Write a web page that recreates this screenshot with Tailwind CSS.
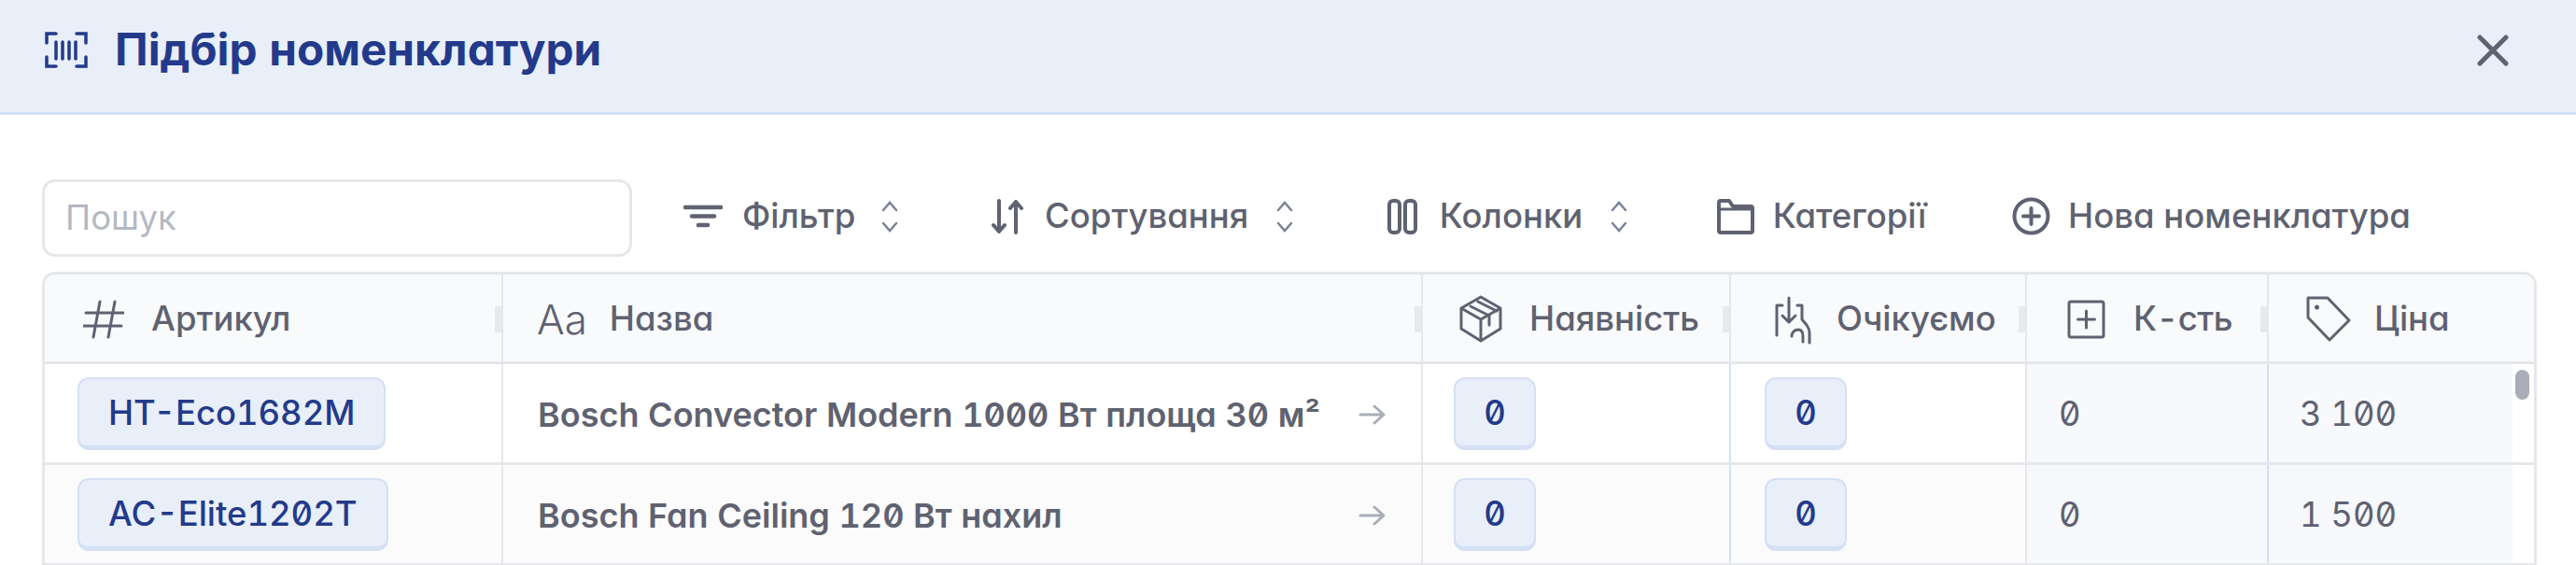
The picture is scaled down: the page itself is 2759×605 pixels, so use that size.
<!DOCTYPE html>
<html lang="uk">
  <head>
    <meta charset="UTF-8" />
    <title>Підбір номенклатури</title>
    <script src="https://cdn.jsdelivr.net/npm/@tailwindcss/browser@4"></script>
  </head>
  <body class="h-[605px] overflow-hidden bg-white font-['Inter',sans-serif] [font-feature-settings:'cv11','tnum','zero'] text-[#5f6270]">
    <!-- Шапка -->
    <header class="flex h-[123px] items-center justify-between border-b-[3px] border-[#d5e0f5] bg-[#e8eff9] pb-[12px] pl-[47px] pr-[72px]">
      <div class="flex items-center gap-[28px]">
        <svg class="h-[41px] w-[48px]" viewBox="12 13 48 41" fill="none" stroke="#233a8b" stroke-width="3.500" stroke-linecap="round">
          <path d="M25 16H15v10M47 16h10v10M25 51H15V41M47 51h10V41" />
          <path d="M25 25v18M32 25v18M39 25v18M46 25v18" />
        </svg>
        <h1 class="text-[47.7px] leading-none font-bold text-[#233a8b]">Підбір номенклатури</h1>
      </div>
      <svg class="h-[34px] w-[34px]" viewBox="0 0 34 34" fill="none" stroke="#5f6270" stroke-width="5" stroke-linecap="round">
        <path d="M3 3l28 28M31 3L3 31" />
      </svg>
    </header>

    <main class="pl-[45px] pr-[42px] pt-[69px]">
      <!-- Панель інструментів -->
      <div class="mb-[16px] flex h-[83px] items-center text-[36.5px] font-medium">
        <div class="flex h-[83px] w-[632px] items-center rounded-[14px] border-[3px] border-[#e5e7eb] pl-[22px] text-[#b4b8c2] font-normal">Пошук</div>

        <button class="ml-[55px] flex items-center pb-[4px]">
          <svg class="mr-[21px] h-[26px] w-[42px]" viewBox="0 0 42 26" fill="none" stroke="#5f6270" stroke-width="4.500" stroke-linecap="round">
            <path d="M2 3h38M9 12.500h24M16 22h10" />
          </svg>
          <span class="w-[119px]">Фільтр</span>
          <svg class="ml-[30px] h-[34px] w-[18px]" viewBox="0 0 18 34" fill="none" stroke="#7b8299" stroke-width="2.500" stroke-linecap="round">
            <path d="M2 10l7-8 7 8M2 24l7 8 7-8" />
          </svg>
        </button>

        <button class="ml-[100px] flex items-center pb-[4px]">
          <svg class="mr-[23px] h-[38px] w-[34px]" viewBox="0 0 34 38" fill="none" stroke="#5f6270" stroke-width="4" stroke-linecap="round" stroke-linejoin="round">
            <path d="M8 2v33M2 28l6 7 6-7M26 36V3M20 10l6-7 6 7" />
          </svg>
          <span class="w-[218px]">Сортування</span>
          <svg class="ml-[30px] h-[34px] w-[18px]" viewBox="0 0 18 34" fill="none" stroke="#7b8299" stroke-width="2.500" stroke-linecap="round">
            <path d="M2 10l7-8 7 8M2 24l7 8 7-8" />
          </svg>
        </button>

        <button class="ml-[101px] flex items-center pb-[4px]">
          <svg class="mr-[22px] h-[38px] w-[32px]" viewBox="0 0 32 38" fill="none" stroke="#5f6270" stroke-width="4">
            <rect x="2" y="2" width="11" height="34" rx="4" />
            <rect x="19" y="2" width="11" height="34" rx="4" />
          </svg>
          <span class="w-[157px]">Колонки</span>
          <svg class="ml-[28px] h-[34px] w-[18px]" viewBox="0 0 18 34" fill="none" stroke="#7b8299" stroke-width="2.500" stroke-linecap="round">
            <path d="M2 10l7-8 7 8M2 24l7 8 7-8" />
          </svg>
        </button>

        <button class="ml-[96px] flex items-center pb-[4px]">
          <svg class="mr-[16px] h-[38px] w-[40px]" viewBox="0 0 40 38" fill="none" stroke="#5f6270" stroke-width="4" stroke-linejoin="round">
            <path d="M2 4a2 2 0 0 1 2-2h9l4 6h19a2 2 0 0 1 2 2v24a2 2 0 0 1-2 2H4a2 2 0 0 1-2-2z" />
            <path d="M2 11h36" stroke-width="3" />
          </svg>
          <span class="w-[172px] whitespace-nowrap">Категорії</span>
        </button>

        <button class="ml-[88px] flex items-center pb-[4px]">
          <svg class="mr-[19px] h-[41px] w-[41px]" viewBox="0 0 41 41" fill="none" stroke="#5f6270" stroke-width="4" stroke-linecap="round">
            <circle cx="20.500" cy="20.500" r="18" />
            <path d="M20.500 12v17M12 20.500h17" />
          </svg>
          <span class="whitespace-nowrap">Нова номенклатура</span>
        </button>
      </div>

      <!-- Таблиця -->
      <div class="relative rounded-t-[14px] border-[3px] border-[#e5e7eb]">
        <div class="grid grid-cols-[491px_985px_330px_317px_259px_1fr] rounded-t-[12px] border-b-[3px] border-[#e5e7eb] bg-[#f9fafc] text-[36.5px] font-medium">
          <div class="relative flex h-[93px] items-center border-r-[2px] border-[#e5e7eb] pl-[41px] pt-[2px]">
            <svg class="mr-[29px] h-[42px] w-[44px]" viewBox="0 0 44 42" fill="none" stroke="#5f6270" stroke-width="3" stroke-linecap="round">
              <path d="M18 2L11 40M34 2l-7 38M3 14h40M1 28h40" />
            </svg>
            Артикул
            <span class="absolute top-[34px] right-0 h-[28px] w-[7px] bg-[#e8e9ed]"></span>
          </div>
          <div class="relative flex h-[93px] items-center border-r-[2px] border-[#e5e7eb] pl-[36px] pt-[2px]">
            <span class="mr-[24px] text-[44px] leading-none font-light [font-feature-settings:normal]">Aa</span>
            Назва
            <span class="absolute top-[34px] right-0 h-[28px] w-[7px] bg-[#e8e9ed]"></span>
          </div>
          <div class="relative flex h-[93px] items-center border-r-[2px] border-[#e5e7eb] pl-[38px] pt-[2px]">
            <svg class="mr-[28px] h-[53px] w-[48px]" viewBox="12 15 48 53" fill="none" stroke="#5f6270" stroke-width="3" stroke-linecap="round" stroke-linejoin="round">
              <path d="M36 18l21 12v22L36 65 15 52V30zM15 30l21 12 21-12M36 42v23M25 28l20 10v10M33 23l20 10" />
            </svg>
            Наявність
            <span class="absolute top-[34px] right-0 h-[28px] w-[7px] bg-[#e8e9ed]"></span>
          </div>
          <div class="relative flex h-[93px] items-center border-r-[2px] border-[#e5e7eb] pl-[46px] pt-[2px]">
            <svg class="mr-[25px] h-[54px] w-[42px]" viewBox="18 14 42 54" fill="none" stroke="#5f6270" stroke-width="3" stroke-linecap="round" stroke-linejoin="round">
              <path d="M34 18v26M27 37l7 7 7-7M27 26h-6v32M43 26h5v15l5 6c2 3 3 5 3 8v11M37 59c0-4 3-7 7-7 4 0 5 3 5 7v6" />
            </svg>
            Очікуємо
            <span class="absolute top-[34px] right-0 h-[28px] w-[7px] bg-[#e8e9ed]"></span>
          </div>
          <div class="relative flex h-[93px] items-center border-r-[2px] border-[#e5e7eb] pl-[43px] pt-[2px]">
            <svg class="mr-[30px] h-[42px] w-[41px]" viewBox="0 0 41 42" fill="none" stroke="#5f6270" stroke-width="3" stroke-linecap="round">
              <rect x="2" y="2" width="37" height="38" rx="2" />
              <path d="M20.500 12v18M11.500 21h18" />
            </svg>
            <span class="tracking-[-0.5px]">К-сть</span>
            <span class="absolute top-[34px] right-0 h-[28px] w-[7px] bg-[#e8e9ed]"></span>
          </div>
          <div class="flex h-[93px] items-center pl-[39px] pt-[2px]">
            <svg class="mr-[24px] h-[50px] w-[50px]" viewBox="10 15 50 50" fill="none" stroke="#5f6270" stroke-width="3" stroke-linejoin="round">
              <path d="M13 17h21l23 24-21 21-23-24z" />
              <circle cx="22.500" cy="27" r="2.500" fill="#5f6270" stroke="none" />
            </svg>
            Ціна
          </div>
        </div>

        <!-- Рядки -->
        <div class="grid grid-cols-[491px_985px_330px_317px_259px_1fr] border-b-[3px] border-[#e5e7eb] text-[36.4px]">
          <div class="flex h-[105px] items-center border-r-[2px] border-[#e5e7eb] pl-[35px]">
            <span class="flex h-[78px] items-center rounded-[12px] border-x-[2px] border-t-[2px] border-b-[5px] border-[#d5e0f5] bg-[#e8eff9] px-[31px] pt-[2px] font-medium text-[#233a8b]">HT-Eco1682M</span>
          </div>
          <div class="flex h-[105px] items-center justify-between border-r-[2px] border-[#e5e7eb] pl-[37px] pr-[38px] pt-[2px] text-[36px] font-semibold whitespace-nowrap">
            <span>Bosch Convector Modern 1000 Вт площа 30 м²</span>
            <svg class="h-[24px] w-[29px]" viewBox="0 0 29 24" fill="none" stroke="#a9adb8" stroke-width="3" stroke-linecap="round" stroke-linejoin="round">
              <path d="M2 12h25M17 3l10 9-10 9" />
            </svg>
          </div>
          <div class="flex h-[105px] items-center border-r-[2px] border-[#d5e0f5] pl-[33px]">
            <span class="flex h-[78px] w-[88px] items-center justify-center rounded-[12px] border-x-[2px] border-t-[2px] border-b-[5px] border-[#d5e0f5] bg-[#e8eff9] pt-[2px] font-medium text-[#233a8b]">0</span>
          </div>
          <div class="flex h-[105px] items-center border-r-[2px] border-[#e5e7eb] pl-[36px]">
            <span class="flex h-[78px] w-[88px] items-center justify-center rounded-[12px] border-x-[2px] border-t-[2px] border-b-[5px] border-[#d5e0f5] bg-[#e8eff9] pt-[2px] font-medium text-[#233a8b]">0</span>
          </div>
          <div class="flex h-[105px] items-center border-r-[2px] border-[#d5e0f5] bg-[#f8f9fd] pl-[34px] pt-[2px]">0</div>
          <div class="mr-[23px] flex h-[105px] items-center whitespace-pre bg-[#f8f9fd] pl-[33px] pt-[2px]">3 100</div>
        </div>

        <div class="grid grid-cols-[491px_985px_330px_317px_259px_1fr] border-b-[3px] border-[#e5e7eb] text-[36.4px]">
          <div class="flex h-[105px] items-center border-r-[2px] border-[#e5e7eb] bg-[#fbfbfc] pl-[35px]">
            <span class="flex h-[78px] items-center rounded-[12px] border-x-[2px] border-t-[2px] border-b-[5px] border-[#d5e0f5] bg-[#e8eff9] px-[31px] pt-[2px] font-medium text-[#233a8b]">AC-Elite1202T</span>
          </div>
          <div class="flex h-[105px] items-center justify-between border-r-[2px] border-[#e5e7eb] bg-[#fbfbfc] pl-[37px] pr-[38px] pt-[2px] text-[36px] font-semibold whitespace-nowrap">
            <span>Bosch Fan Ceiling 120 Вт нахил</span>
            <svg class="h-[24px] w-[29px]" viewBox="0 0 29 24" fill="none" stroke="#a9adb8" stroke-width="3" stroke-linecap="round" stroke-linejoin="round">
              <path d="M2 12h25M17 3l10 9-10 9" />
            </svg>
          </div>
          <div class="flex h-[105px] items-center border-r-[2px] border-[#d5e0f5] bg-[#fbfbfc] pl-[33px]">
            <span class="flex h-[78px] w-[88px] items-center justify-center rounded-[12px] border-x-[2px] border-t-[2px] border-b-[5px] border-[#d5e0f5] bg-[#e8eff9] pt-[2px] font-medium text-[#233a8b]">0</span>
          </div>
          <div class="flex h-[105px] items-center border-r-[2px] border-[#e5e7eb] bg-[#fbfbfc] pl-[36px]">
            <span class="flex h-[78px] w-[88px] items-center justify-center rounded-[12px] border-x-[2px] border-t-[2px] border-b-[5px] border-[#d5e0f5] bg-[#e8eff9] pt-[2px] font-medium text-[#233a8b]">0</span>
          </div>
          <div class="flex h-[105px] items-center border-r-[2px] border-[#d5e0f5] bg-[#f6f8fc] pl-[34px] pt-[2px]">0</div>
          <div class="mr-[23px] flex h-[105px] items-center whitespace-pre bg-[#f6f8fc] pl-[33px] pt-[2px]">1 500</div>
        </div>

        <!-- Скролбар -->
        <span class="absolute top-[102px] right-[5px] h-[32px] w-[15px] rounded-full bg-[#a9adb8]"></span>
      </div>
    </main>
  </body>
</html>
